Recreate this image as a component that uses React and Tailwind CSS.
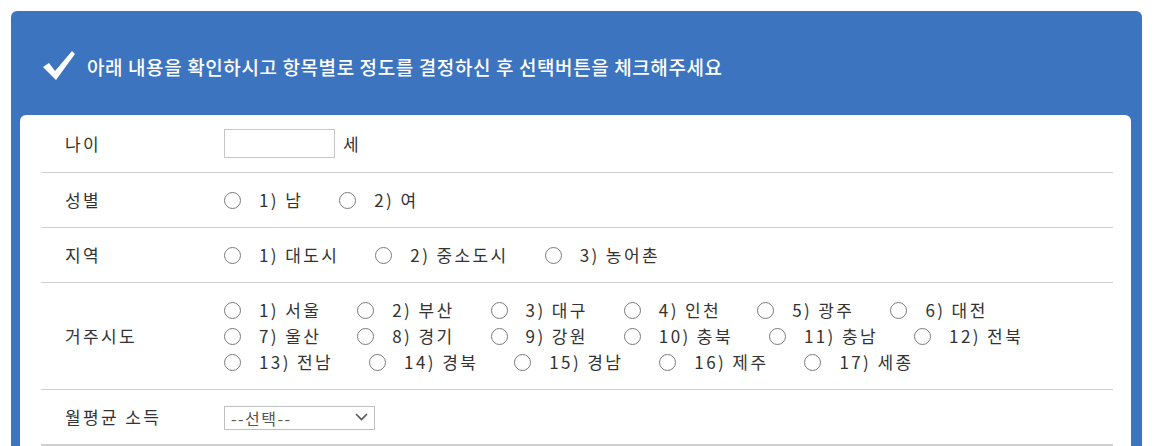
import { useState } from 'react';

const font = { fontFamily: '"Noto Sans CJK KR", "Noto Sans", sans-serif' };

const cityLines = [
  ['1) 서울', '2) 부산', '3) 대구', '4) 인천', '5) 광주', '6) 대전'],
  ['7) 울산', '8) 경기', '9) 강원', '10) 충북', '11) 충남', '12) 전북'],
  ['13) 전남', '14) 경북', '15) 경남', '16) 제주', '17) 세종'],
];

function Radio({ label, checked, onClick }) {
  return (
    <label className="flex items-center mr-[36px] cursor-pointer" onClick={onClick}>
      <span className="w-[17px] h-[17px] rounded-full border border-[#7a7a7a] bg-white flex items-center justify-center">
        {checked && <span className="w-[9px] h-[9px] rounded-full bg-[#333]" />}
      </span>
      <span className="ml-[18px] tracking-[2.4px] whitespace-nowrap">{label}</span>
    </label>
  );
}

function Row({ label, children, last }) {
  return (
    <div className={`flex items-center py-[14px] ${last ? '' : 'border-b border-[#cfcfcf]'}`}>
      <div className="w-[183px] pl-6 shrink-0 tracking-[2.4px]">{label}</div>
      <div className="flex-1">{children}</div>
    </div>
  );
}

export default function App() {
  const [picked, setPicked] = useState({});
  const pick = (k, v) => setPicked((p) => ({ ...p, [k]: v }));

  return (
    <div className="bg-white min-h-screen pt-[11px] px-[11px] pr-[16px]" style={font}>
      <div className="bg-[#3c74bf] rounded-t-md pl-[9px] pr-[11px]">
        <div className="h-[104px] flex items-center pl-[23px] pt-[8px] text-white">
          <svg width="32" height="29" viewBox="0 0 32 29" className="mr-[12px] mt-[-4px]">
            <path d="M0 16 L6 12 L12 20 L29 0 L32 3 L13 29 Z" fill="#fff" />
          </svg>
          <span className="text-[19px] font-medium tracking-[0.6px]">아래 내용을 확인하시고 항목별로 정도를 결정하신 후 선택버튼을 체크해주세요</span>
        </div>
        <div className="bg-white rounded-t-md pl-[21px] pr-[18px] text-[17px] text-[#333]">
          <Row label="나이">
            <div className="flex items-center">
              <input type="text" className="w-[111px] h-[29px] border border-[#c6c6c6] outline-none px-1" />
              <span className="ml-[8px]">세</span>
            </div>
          </Row>
          <Row label="성별">
            <div className="flex items-center h-[26px]">
              {['1) 남', '2) 여'].map((t) => (
                <Radio key={t} label={t} checked={picked.sex === t} onClick={() => pick('sex', t)} />
              ))}
            </div>
          </Row>
          <Row label="지역">
            <div className="flex items-center h-[26px]">
              {['1) 대도시', '2) 중소도시', '3) 농어촌'].map((t) => (
                <Radio key={t} label={t} checked={picked.area === t} onClick={() => pick('area', t)} />
              ))}
            </div>
          </Row>
          <Row label="거주시도">
            <div className="flex flex-col">
              {cityLines.map((line, i) => (
                <div key={i} className="flex items-center h-[26px]">
                  {line.map((t) => (
                    <Radio key={t} label={t} checked={picked.city === t} onClick={() => pick('city', t)} />
                  ))}
                </div>
              ))}
            </div>
          </Row>
          <Row label="월평균 소득">
            <div className="flex items-center h-[26px]">
              <div className="relative w-[151px] h-[24px]">
                <select className="appearance-none w-full h-full border border-[#c0c0c0] bg-white pl-[6px] text-[16px] leading-[22px] tracking-[1.5px] text-[#555] outline-none">
                  <option>--선택--</option>
                </select>
                <svg width="13" height="8" viewBox="0 0 13 8" className="absolute right-[7px] top-[8px] pointer-events-none">
                  <path d="M1 1 L6.5 6.5 L12 1" fill="none" stroke="#555" strokeWidth="1.6" />
                </svg>
              </div>
            </div>
          </Row>
          <div className="border-t border-[#cfcfcf] h-[10px]" />
        </div>
      </div>
    </div>
  );
}
